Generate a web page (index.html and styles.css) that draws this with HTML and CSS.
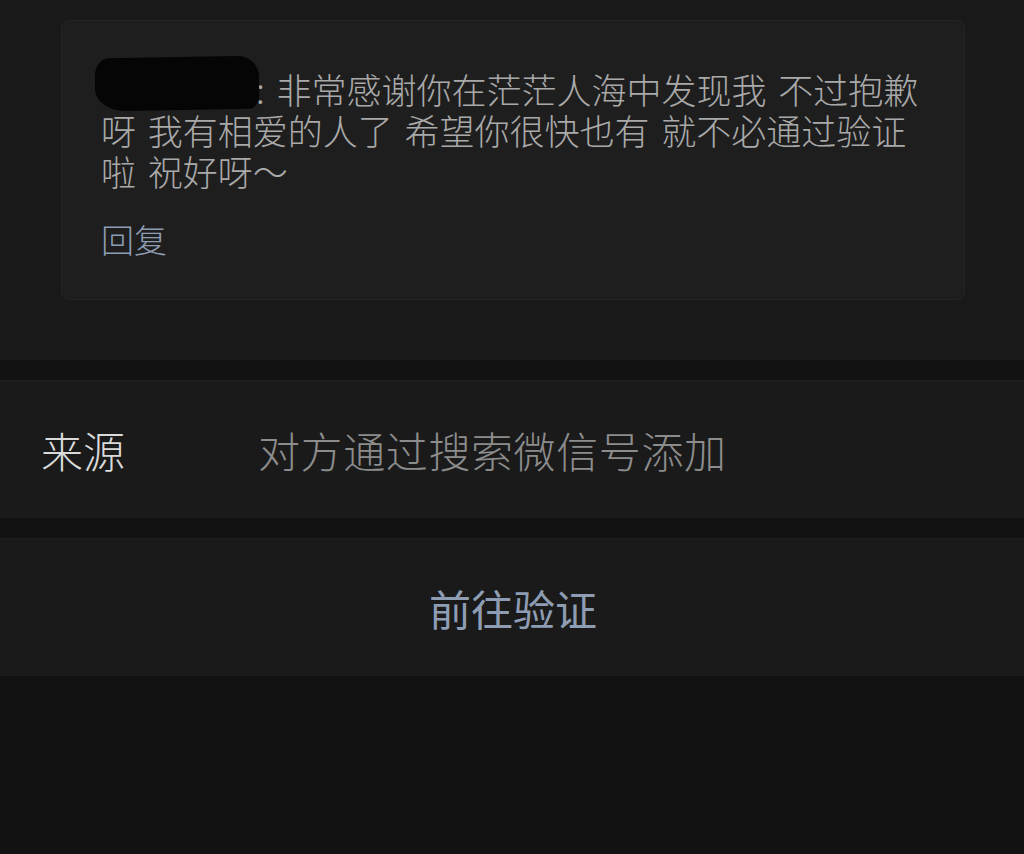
FILE: index.html
```html
<!doctype html>
<html lang="zh-CN">
	<head>
		<meta charset="utf-8">
		<title>好友验证</title>
		<link rel="stylesheet" href="styles.css">
	</head>
	<body>
		<div class="msg-section">
			<div class="msg-card">
				<p class="msg-text"><span class="redact"></span>: 非常感谢你在茫茫人海中发现我 不过抱歉呀 我有相爱的人了 希望你很快也有 就不必通过验证啦 祝好呀～</p>
				<a class="msg-reply">回复</a>
			</div>
		</div>

		<div class="info-row">
			<span class="info-label">来源</span>
			<span class="info-value">对方通过搜索微信号添加</span>
		</div>

		<div class="action-row">
			<a class="action-btn">前往验证</a>
		</div>
	</body>
</html>
```

FILE: styles.css
```css
html,
body,
div,
p {
	margin: 0;
	padding: 0;
}
body {
	min-height: 854px;
	font-family: "Noto Sans CJK SC", "Noto Sans", sans-serif;
	background: #121212;
}
a {
	text-decoration: none;
	cursor: pointer;
}
/* 消息卡片 */
.msg-section {
	height: 360px;
	padding: 20px 59px 0 61px;
	box-sizing: border-box;
	background: #191919;
}
.msg-card {
	height: 280px;
	padding: 47px 40px 0 39px;
	box-sizing: border-box;
	border: 1px solid #242424;
	border-radius: 8px;
	background: #1e1e1e;
}
.msg-text {
	font-size: 35px;
	font-weight: 300;
	line-height: 41px;
	word-spacing: 4px;
	color: #a9a9a9;
}
.redact {
	display: inline-block;
	width: 164px;
	height: 53px;
	margin: -14px -3px -6px -6px;
	vertical-align: baseline;
	border-radius: 14px 22px 10px 30px / 18px 20px 14px 22px;
	background: #050505;
	transform: rotate(-1deg);
}
.msg-reply {
	display: block;
	margin-top: 28px;
	font-size: 33px;
	font-weight: 300;
	line-height: 41px;
	color: #8e9db4;
}
/* 来源 */
.info-row {
	display: flex;
	align-items: center;
	height: 138px;
	margin-top: 20px;
	padding-left: 41px;
	box-sizing: border-box;
	border-top: 1px solid #1f1f1f;
	background: #1a1a1a;
	font-size: 42px;
	font-weight: 300;
}
.info-label {
	width: 217px;
	color: #dadada;
}
.info-value {
	letter-spacing: 0.6px;
	color: #8c8c8c;
}
/* 前往验证 */
.action-row {
	display: flex;
	align-items: center;
	justify-content: center;
	height: 138px;
	margin-top: 20px;
	box-sizing: border-box;
	border-top: 1px solid #1f1f1f;
	border-bottom: 1px solid #1d1d1d;
	background: #1a1a1a;
}
.action-btn {
	padding-left: 2px;
	font-size: 42px;
	font-weight: 400;
	color: #8e9db3;
}
```
